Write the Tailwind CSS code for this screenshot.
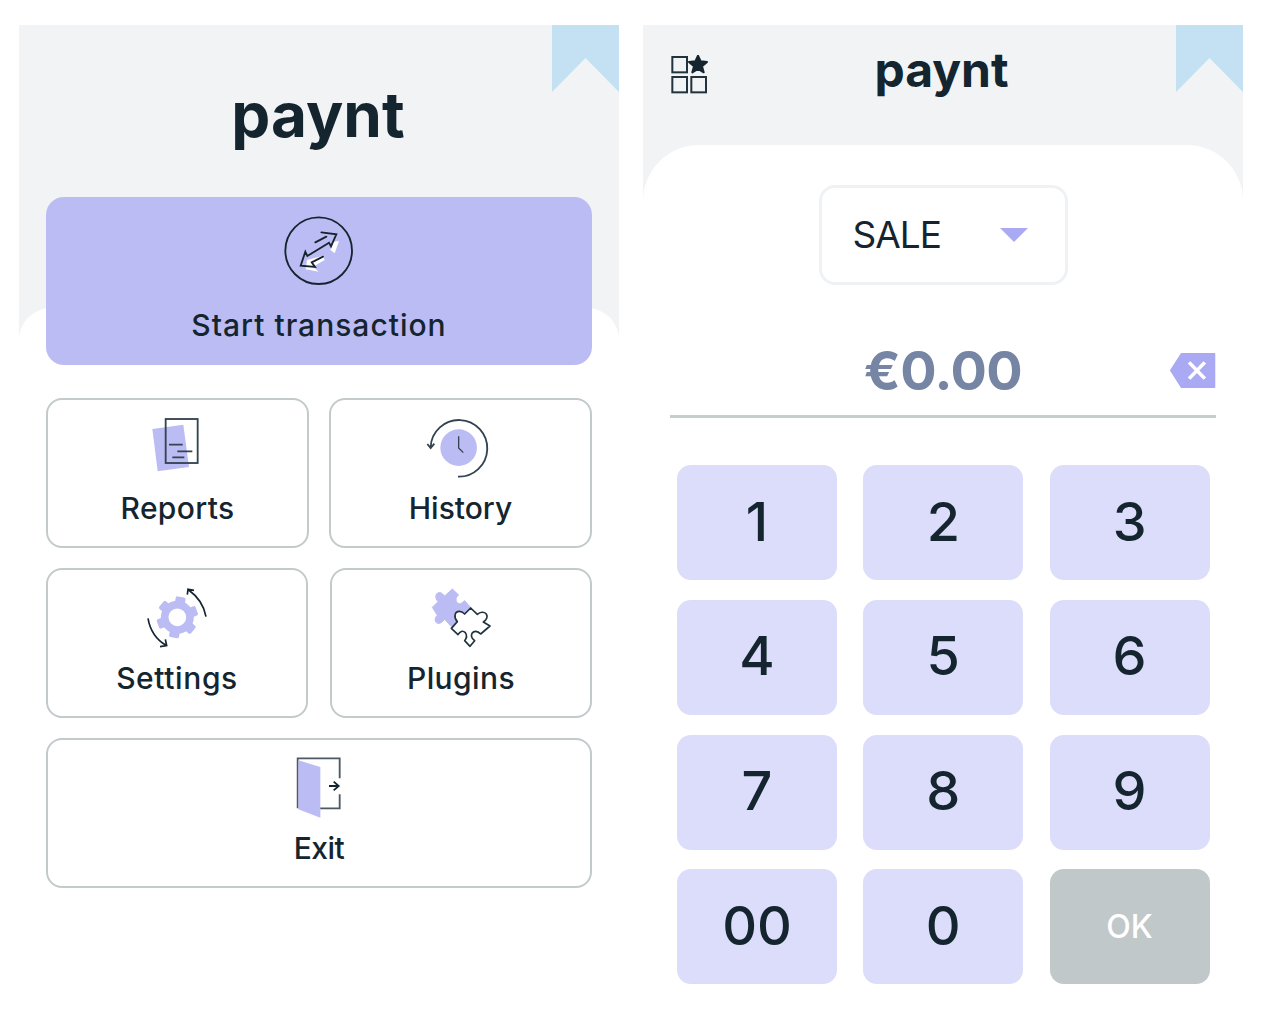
<!DOCTYPE html>
<html lang="en">
<head>
    <meta charset="UTF-8">
    <title>Paynt</title>
    <script src="https://cdn.jsdelivr.net/npm/@tailwindcss/browser@4"></script>
</head>
<body class="bg-white font-['Inter',sans-serif] text-[#14252f]">
    <div class="flex gap-[24px] pl-[19px] pt-[25px] w-[1262px] h-[1012px] overflow-hidden">

        <!-- Main menu -->
        <section class="w-[600px]">
            <div class="relative h-[283px] bg-[#f1f3f5]">
                <svg class="absolute right-0 top-0" width="67" height="67" viewBox="0 0 67 67"><polygon points="0,0 67,0 67,67 33.5,33 0,67" fill="#c3e1f2"/></svg>
                <div class="pt-[52px] pr-[2px] text-center text-[62px] leading-[76px] font-bold">paynt</div>
            </div>
            <div class="bg-[linear-gradient(#f1f3f5_35px,white_35px)]">
                <div class="flow-root bg-white rounded-t-[32px] px-[27px]">
                    <button class="relative -mt-[111px] flex flex-col items-center w-[546px] h-[168px] rounded-[18px] bg-[#bcbcf4]">
                        <svg class="mt-[18px]" width="71.7" height="71.7" viewBox="40 30 215 215" fill="none" stroke="#14252f" stroke-linecap="round">
                            <circle cx="147" cy="137" r="100" stroke-width="5.5"/>
                            <polygon points="190,110 208,108 195,145 182,135" fill="#fff" stroke="none"/>
                            <polygon points="112,165 160,152 165,165 130,185 147,200 108,193" fill="#fff" stroke="none"/>
                            <path d="M137 112 L170 95 M155 82 L200 88 L184 124 L178 113 L113 153 L107 140 L93 182 L136 186 L126 172 L160 155" stroke-width="5.5" stroke-linejoin="miter"/>
                        </svg>
                        <span class="mt-auto mb-[22px] text-[30px] leading-[36px] font-medium tracking-[1px]">Start transaction</span>
                    </button>

                    <div class="flex gap-[20px] mt-[33px]">
                        <button class="flex flex-col items-center w-[263px] h-[150px] rounded-[16px] border-2 border-[#c3cacb]">
                            <svg class="mt-[17px] -ml-[5px]" width="50" height="56.7" viewBox="60 50 150 170" fill="none">
                                <polygon points="67,86 160,73 177,200 83,213" fill="#bcbcf4"/>
                                <rect x="107" y="56" width="96" height="132" stroke="#33434f" stroke-width="5.5"/>
                                <path d="M117 133H158M142 153H187M127 171H163" stroke="#33434f" stroke-width="5"/>
                            </svg>
                            <span class="mt-auto mb-[20px] text-[30px] leading-[36px] font-medium tracking-[0.35px]">Reports</span>
                        </button>
                        <button class="flex flex-col items-center w-[263px] h-[150px] rounded-[16px] border-2 border-[#c3cacb]">
                            <svg class="mt-[17px] -ml-[6px]" width="68.3" height="63.3" viewBox="880 50 205 190" fill="none" stroke="#33434f">
                                <circle cx="987" cy="142" r="55" fill="#bcbcf4" stroke="none"/>
                                <path d="M987 108V143L1001 157" stroke-width="4"/>
                                <path d="M985 229A85 85 0 1 0 903 140M893 131L903 143L914 130" stroke-width="5.5"/>
                            </svg>
                            <span class="mt-auto mb-[20px] text-[30px] leading-[36px] font-medium">History</span>
                        </button>
                    </div>

                    <div class="flex gap-[22px] mt-[20px]">
                        <button class="flex flex-col items-center w-[263px] h-[150px] rounded-[16px] border-2 border-[#c3cacb]">
                            <svg class="mt-[10px]" width="75" height="75" viewBox="0 0 225 225" fill="none">
                                <circle cx="112" cy="112" r="38" stroke="#bcbcf4" stroke-width="23"/>
                                <g fill="#bcbcf4">
                                    <rect x="97" y="50" width="30" height="24" rx="5" transform="rotate(10 112 112)"/>
                                    <rect x="97" y="50" width="30" height="24" rx="5" transform="rotate(70 112 112)"/>
                                    <rect x="97" y="50" width="30" height="24" rx="5" transform="rotate(130 112 112)"/>
                                    <rect x="97" y="50" width="30" height="24" rx="5" transform="rotate(190 112 112)"/>
                                    <rect x="97" y="50" width="30" height="24" rx="5" transform="rotate(250 112 112)"/>
                                    <rect x="97" y="50" width="30" height="24" rx="5" transform="rotate(310 112 112)"/>
                                </g>
                                <path d="M198 110C192 76 174 50 146 30M142 44L144 28L162 31M24 115C30 150 48 178 78 196M60 200L80 197L76 178" stroke="#14252f" stroke-width="5"/>
                            </svg>
                            <span class="mt-auto mb-[20px] text-[30px] leading-[36px] font-medium tracking-[0.6px]">Settings</span>
                        </button>
                        <button class="flex flex-col items-center w-[263px] h-[150px] rounded-[16px] border-2 border-[#c3cacb]">
                            <svg class="mt-[10px]" width="75" height="75" viewBox="0 0 225 225">
                                <path d="M25 82L42 65C30 52 36 36 48 38C54 38 58 44 62 48L85 27L104 45C92 52 94 70 108 72C114 70 118 64 122 62L142 85L82 140L62 118C56 124 50 132 42 130C32 128 30 114 40 106Z" fill="#bcbcf4" stroke="#bcbcf4" stroke-width="3" stroke-linejoin="round"/>
                                <path d="M82 145L100 125C88 112 92 94 106 94C114 94 118 98 122 102L140 84L160 103C168 96 180 94 187 102C192 110 188 120 178 126L198 138L170 162C160 152 150 152 144 160C140 168 144 176 152 182L138 199L122 182C128 174 130 166 124 158C116 150 108 154 102 164Z" fill="#fff" stroke="#22333e" stroke-width="5" stroke-linejoin="round"/>
                            </svg>
                            <span class="mt-auto mb-[20px] text-[30px] leading-[36px] font-medium tracking-[0.4px]">Plugins</span>
                        </button>
                    </div>

                    <button class="flex flex-col items-center w-[546px] h-[150px] mt-[20px] rounded-[16px] border-2 border-[#c3cacb]">
                        <svg class="mt-[15px]" width="51.7" height="65" viewBox="70 30 155 195" fill="none">
                            <path d="M84 190V40H210V100M210 148V190H150" stroke="#4b5a64" stroke-width="5.5"/>
                            <polygon points="86,46 152,66 152,218 86,193" fill="#bcbcf4"/>
                            <path d="M178 123H207M192 110L207 123L192 136" stroke="#14252f" stroke-width="5.5"/>
                        </svg>
                        <span class="mt-auto mb-[20px] text-[30px] leading-[36px] font-medium tracking-[-0.5px]">Exit</span>
                    </button>
                </div>
            </div>
        </section>

        <!-- Amount entry -->
        <section class="w-[600px]">
            <div class="relative grid grid-cols-[1fr_auto_1fr] h-[120px] bg-[#f1f3f5]">
                <svg class="ml-[28px] mt-[30px]" width="38" height="42" viewBox="33 46 114 126" fill="none" stroke="#22333e" stroke-width="6">
                    <rect x="37" y="52" width="44" height="46"/>
                    <rect x="37" y="112" width="44" height="46"/>
                    <rect x="94" y="112" width="44" height="46"/>
                    <polygon points="114,48 122,65 141,67 126,80 131,98 114,88 97,98 102,80 87,67 106,65" fill="#14252f" stroke="#14252f" stroke-linejoin="round"/>
                </svg>
                <div class="pt-[15px] -ml-[3px] text-[48px] leading-[60px] font-bold">paynt</div>
                <svg class="absolute right-0 top-0" width="67" height="67" viewBox="0 0 67 67"><polygon points="0,0 67,0 67,67 33.5,33 0,67" fill="#c3e1f2"/></svg>
            </div>
            <div class="bg-[linear-gradient(#f1f3f5_60px,white_60px)]">
                <div class="bg-white rounded-t-[56px] pt-[40px]">
                    <div class="flex items-center justify-between mx-auto w-[249px] h-[100px] pl-[31px] pr-[37px] rounded-[16px] border-[3px] border-[#eff2f5]">
                        <span class="text-[37px] leading-[44px] tracking-[-1px]">SALE</span>
                        <svg width="28" height="14" viewBox="0 0 28 14"><polygon points="0,0 28,0 14,14" fill="#aaa9f3"/></svg>
                    </div>

                    <div class="grid grid-cols-[1fr_auto_1fr] items-center mx-[27px] h-[133px] pt-[41px] border-b-[3px] border-[#c3cecd]">
                        <span></span>
                        <span class="text-[54px] leading-[64px] font-bold tracking-[-0.5px] text-[#7585a3]">€0.00</span>
                        <svg class="justify-self-end" width="46" height="35" viewBox="1402 72 128 105" preserveAspectRatio="none">
                            <polygon points="1404,124 1434,74 1526,74 1526,175 1434,175" fill="#aaa9f3" stroke="#aaa9f3" stroke-width="4" stroke-linejoin="round"/>
                            <path d="M1455 100L1499 149M1499 100L1455 149" stroke="#fff" stroke-width="10"/>
                        </svg>
                    </div>

                    <div class="grid grid-cols-[160px_160px_160px] auto-rows-[115px] gap-x-[26.3px] gap-y-[19.8px] mt-[47px] ml-[34px] text-[54px] font-medium">
                        <button class="pb-[3px] rounded-[14px] bg-[#dcdcfb]">1</button>
                        <button class="pb-[3px] rounded-[14px] bg-[#dcdcfb]">2</button>
                        <button class="pb-[3px] rounded-[14px] bg-[#dcdcfb]">3</button>
                        <button class="pb-[3px] rounded-[14px] bg-[#dcdcfb]">4</button>
                        <button class="pb-[3px] rounded-[14px] bg-[#dcdcfb]">5</button>
                        <button class="pb-[3px] rounded-[14px] bg-[#dcdcfb]">6</button>
                        <button class="pb-[3px] rounded-[14px] bg-[#dcdcfb]">7</button>
                        <button class="pb-[3px] rounded-[14px] bg-[#dcdcfb]">8</button>
                        <button class="pb-[3px] rounded-[14px] bg-[#dcdcfb]">9</button>
                        <button class="pb-[3px] rounded-[14px] bg-[#dcdcfb]">00</button>
                        <button class="pb-[3px] rounded-[14px] bg-[#dcdcfb]">0</button>
                        <button class="rounded-[14px] bg-[#c1c8c9] text-white text-[32px]">OK</button>
                    </div>
                </div>
            </div>
        </section>
    </div>
</body>
</html>
